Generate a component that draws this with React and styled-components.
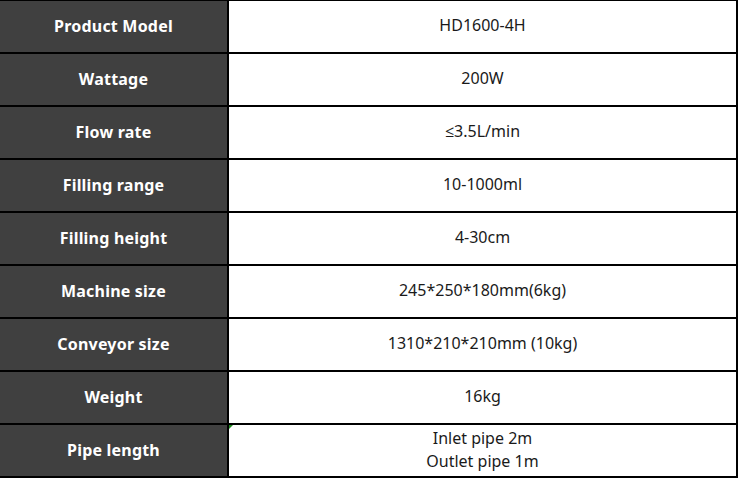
import styled, { createGlobalStyle } from "styled-components";

const GlobalStyle = createGlobalStyle`
    html, body {
        margin: 0;
        padding: 0;
        background: #ffffff;
    }
    body {
        font-family: "Noto Sans", "Open Sans", sans-serif;
    }
`

const SpecTable = styled.div`
    width: 738px;
    border-top: 1px solid #000000;
    display: flex;
    flex-direction: column;
`

const SpecRow = styled.div`
    display: grid;
    grid-template-columns: 229px 1fr;
    height: 51px;
    border-bottom: 2px solid #000000;
    border-right: 2px solid #000000;
`

const LabelCell = styled.div`
    background-color: #404040;
    color: #ffffff;
    font-weight: bold;
    font-size: 16px;
    letter-spacing: 0.2px;
    display: flex;
    align-items: center;
    justify-content: center;
    padding-bottom: 2px;
    border-right: 2px solid #000000;
`

const ValueCell = styled.div`
    position: relative;
    color: #1a1a1a;
    font-size: 16px;
    line-height: 23px;
    display: flex;
    flex-direction: column;
    align-items: center;
    justify-content: center;
    text-align: center;
    padding-bottom: 2px;
`

const ErrorMark = styled.span`
    position: absolute;
    top: 0;
    left: 0;
    width: 0;
    height: 0;
    border-top: 4px solid #1e8a1e;
    border-right: 4px solid transparent;
`

const specs = [
    { label: "Product Model", value: ["HD1600-4H"] },
    { label: "Wattage", value: ["200W"] },
    { label: "Flow rate", value: ["≤3.5L/min"] },
    { label: "Filling range", value: ["10-1000ml"] },
    { label: "Filling height", value: ["4-30cm"] },
    { label: "Machine size", value: ["245*250*180mm(6kg)"] },
    { label: "Conveyor size", value: ["1310*210*210mm (10kg)"] },
    { label: "Weight", value: ["16kg"] },
    { label: "Pipe length", value: ["Inlet pipe 2m", "Outlet pipe 1m"], mark: true },
]

export default function App(){
    return (
        <>
            <GlobalStyle/>
            <SpecTable>
                {specs.map((row)=>(
                    <SpecRow key={row.label}>
                        <LabelCell>{row.label}</LabelCell>
                        <ValueCell>
                            {row.mark && <ErrorMark/>}
                            {row.value.map((line)=>(
                                <div key={line}>{line}</div>
                            ))}
                        </ValueCell>
                    </SpecRow>
                ))}
            </SpecTable>
        </>
    )
}
